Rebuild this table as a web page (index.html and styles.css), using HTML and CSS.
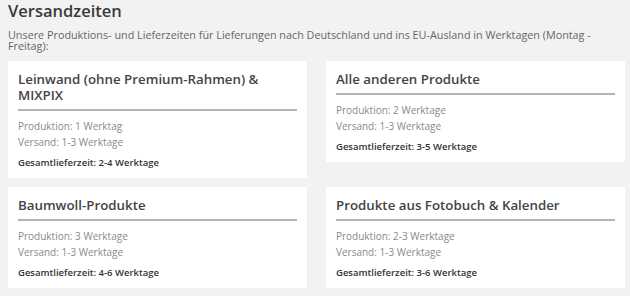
FILE: index.html
```html
<!DOCTYPE html>
<html lang="de">
<head>
  <meta charset="UTF-8">
  <meta name="viewport" content="width=device-width, initial-scale=1.0">
  <title>Versandzeiten</title>
  <link rel="stylesheet" href="styles.css">
</head>
<body>

<div class="shipping">
  <!-- Header -->
  <h1>Versandzeiten</h1>
  <p class="intro">Unsere Produktions- und Lieferzeiten für Lieferungen nach Deutschland und ins EU-Ausland in Werktagen (Montag - Freitag):</p>

  <!-- Product groups -->
  <div class="times-grid">
    <div class="time-card">
      <h2>Leinwand (ohne Premium-Rahmen) &amp; MIXPIX</h2>
      <p>Produktion: 1 Werktag</p>
      <p>Versand: 1-3 Werktage</p>
      <p class="total">Gesamtlieferzeit: 2-4 Werktage</p>
    </div>
    <div class="time-card">
      <h2>Alle anderen Produkte</h2>
      <p>Produktion: 2 Werktage</p>
      <p>Versand: 1-3 Werktage</p>
      <p class="total">Gesamtlieferzeit: 3-5 Werktage</p>
    </div>
    <div class="time-card">
      <h2>Baumwoll-Produkte</h2>
      <p>Produktion: 3 Werktage</p>
      <p>Versand: 1-3 Werktage</p>
      <p class="total">Gesamtlieferzeit: 4-6 Werktage</p>
    </div>
    <div class="time-card">
      <h2>Produkte aus Fotobuch &amp; Kalender</h2>
      <p>Produktion: 2-3 Werktage</p>
      <p>Versand: 1-3 Werktage</p>
      <p class="total">Gesamtlieferzeit: 3-6 Werktage</p>
    </div>
  </div>
</div>

</body>
</html>
```

FILE: styles.css
```css
/* Basic Styles */
body {
  font-family: "Open Sans", sans-serif;
  margin: 0;
  padding: 0;
  background-color: #f2f2f2;
  color: #555;
}
.shipping {
  padding: 0 5px 0 8px;
}
h1 {
  font-size: 16.5px;
  font-weight: 600;
  color: #3a3a3a;
  margin: 0;
  padding-top: 1px;
  line-height: 20px;
}
.intro {
  font-size: 10.8px;
  line-height: 11px;
  color: #666;
  margin: 8px 0 0;
}

/* Cards */
.times-grid {
  display: grid;
  grid-template-columns: 299px 299px;
  column-gap: 19px;
  row-gap: 9px;
  align-items: start;
  margin-top: 10px;
}
.time-card {
  background-color: #fff;
  padding: 10px 10px 7px;
}
.time-card h2 {
  font-size: 13.3px;
  font-weight: 600;
  color: #444;
  line-height: 16px;
  margin: 0;
  padding-bottom: 6px;
  border-bottom: 2px solid #b3b3b3;
}
.time-card p {
  font-size: 10px;
  font-weight: 400;
  color: #8a8a8a;
  line-height: 16px;
  margin: 0;
}
.time-card h2 + p {
  margin-top: 7px;
}
.time-card p.total {
  font-weight: 600;
  font-size: 9.5px;
  color: #333;
  margin-top: 5px;
}
```
